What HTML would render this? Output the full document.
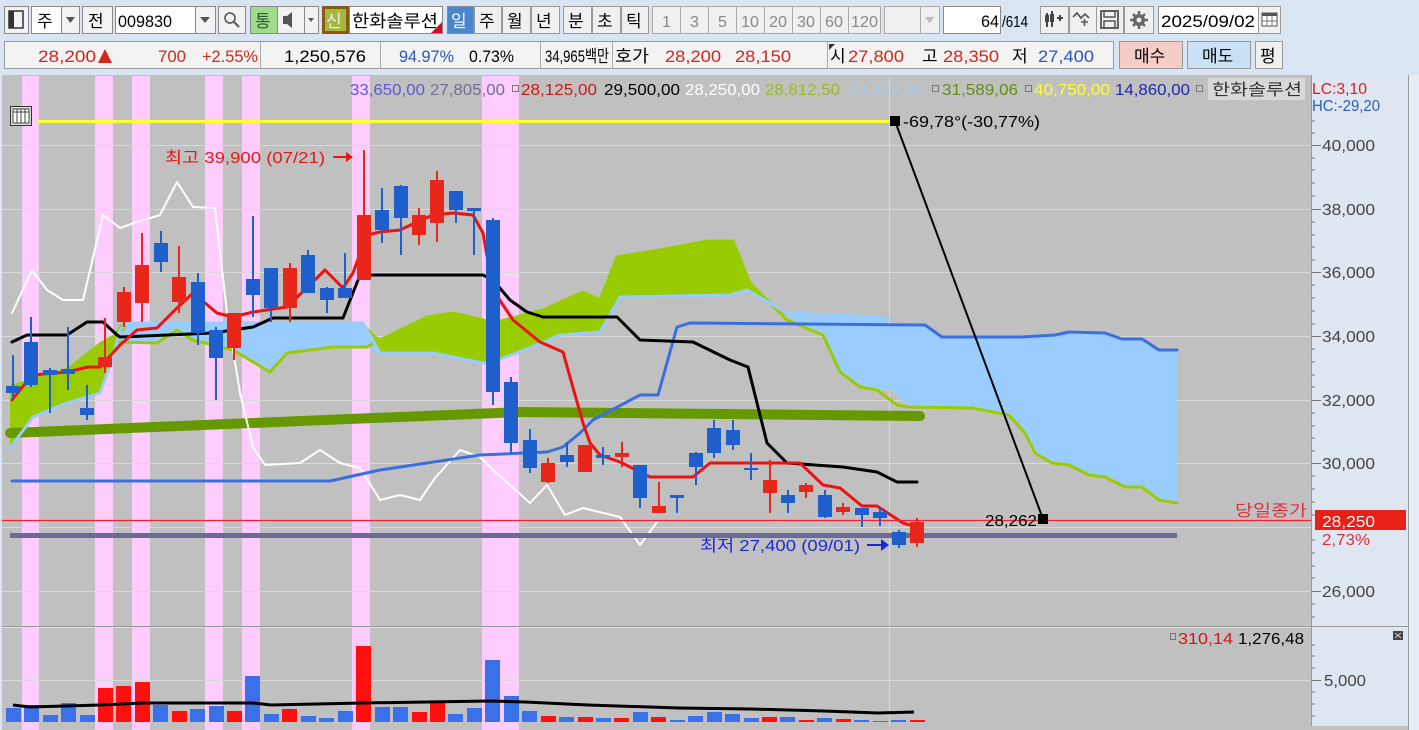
<!DOCTYPE html>
<html><head><meta charset="utf-8"><style>
html,body{margin:0;padding:0;background:#d9e5f3;overflow:hidden}
svg{display:block}
text{font-family:"Liberation Sans","Noto Sans CJK KR",sans-serif}
.r{fill:#e8261a}.b{fill:#1f5fcc}
.vr{fill:#ff1010}.vb{fill:#3a70e8}
</style></head><body>
<svg width="1419" height="730" viewBox="0 0 1419 730" xmlns="http://www.w3.org/2000/svg">
<rect width="1419" height="730" fill="#d9e5f3"/>
<g font-size="17" stroke-width="1">
<rect x="4.5" y="6.5" width="24" height="27" fill="#f2f2f2" stroke="#8a8a8a"/>
<rect x="9" y="11" width="14" height="17" fill="none" stroke="#333" stroke-width="1.5"/><rect x="9" y="11" width="5" height="17" fill="#333"/>
<rect x="31.5" y="6.5" width="30" height="27" fill="#fff" stroke="#8a8a8a"/><text x="37" y="27">주</text>
<rect x="61.5" y="6.5" width="18" height="27" fill="#f2f2f2" stroke="#8a8a8a"/><path d="M66 17h9l-4.5 6z" fill="#555"/>
<rect x="82.5" y="6.5" width="30" height="27" fill="#f2f2f2" stroke="#8a8a8a"/><text x="88" y="27">전</text>
<rect x="115.5" y="6.5" width="80" height="27" fill="#fff" stroke="#8a8a8a"/><text x="118" y="27" textLength="54" lengthAdjust="spacingAndGlyphs">009830</text>
<rect x="195.5" y="6.5" width="20" height="27" fill="#f2f2f2" stroke="#8a8a8a"/><path d="M200 17h10l-5 6z" fill="#555"/>
<rect x="218.5" y="6.5" width="27" height="27" fill="#f2f2f2" stroke="#8a8a8a"/><circle cx="230" cy="18" r="5" fill="none" stroke="#555" stroke-width="1.6"/><path d="M234 22l5 5" stroke="#555" stroke-width="2"/>
<rect x="250.5" y="6.5" width="27" height="27" fill="#9edc8c" stroke="#8a8a8a"/><text x="255" y="27" fill="#2a5a2a">통</text>
<rect x="277.5" y="6.5" width="27" height="27" fill="#f2f2f2" stroke="#8a8a8a"/><path d="M283 16h4l5-4v16l-5-4h-4z" fill="#555"/>
<rect x="304.5" y="6.5" width="14" height="27" fill="#f2f2f2" stroke="#8a8a8a"/><path d="M308 18h6l-3 4z" fill="#555"/>
<rect x="322" y="6" width="27" height="28" fill="#8a5a14"/><rect x="325" y="9" width="21" height="22" fill="#a4b83c"/><text x="326" y="27" fill="#eef">신</text>
<rect x="349.5" y="6.5" width="93" height="27" fill="#fff" stroke="#8a8a8a"/><text x="352" y="27" textLength="86" lengthAdjust="spacingAndGlyphs">한화솔루션</text><path d="M442 22v11h-11z" fill="#d01020"/>
<rect x="447.5" y="6.5" width="26" height="27" fill="#4a86cc" stroke="#8a8a8a"/><text x="451" y="27" fill="#fff">일</text>
<g fill="#f0f0f0" stroke="#9a9a9a">
<rect x="474.5" y="6.5" width="27" height="27"/><rect x="502.5" y="6.5" width="28" height="27"/><rect x="531.5" y="6.5" width="28" height="27"/>
<rect x="563.5" y="6.5" width="28" height="27"/><rect x="592.5" y="6.5" width="28" height="27"/><rect x="621.5" y="6.5" width="27" height="27"/>
</g>
<text x="479" y="27">주</text><text x="507" y="27">월</text><text x="536" y="27">년</text><text x="568" y="27">분</text><text x="597" y="27">초</text><text x="626" y="27">틱</text>
<g fill="#f0f0f0" stroke="#aaa">
<rect x="652.5" y="6.5" width="28" height="27"/><rect x="680.5" y="6.5" width="28" height="27"/><rect x="708.5" y="6.5" width="28" height="27"/><rect x="736.5" y="6.5" width="28" height="27"/><rect x="764.5" y="6.5" width="28" height="27"/><rect x="792.5" y="6.5" width="28" height="27"/><rect x="820.5" y="6.5" width="28" height="27"/><rect x="848.5" y="6.5" width="32" height="27"/>
<rect x="884.5" y="6.5" width="36" height="27"/><rect x="920.5" y="6.5" width="19" height="27"/>
</g>
<g fill="#888" font-size="16"><text x="662" y="27">1</text><text x="690" y="27">3</text><text x="718" y="27">5</text><text x="741" y="27" textLength="18" lengthAdjust="spacingAndGlyphs">10</text><text x="769" y="27" textLength="18" lengthAdjust="spacingAndGlyphs">20</text><text x="797" y="27" textLength="18" lengthAdjust="spacingAndGlyphs">30</text><text x="825" y="27" textLength="18" lengthAdjust="spacingAndGlyphs">60</text><text x="851" y="27" textLength="27" lengthAdjust="spacingAndGlyphs">120</text></g>
<path d="M925 17h9l-4.5 6z" fill="#bbb"/>
<rect x="943.5" y="6.5" width="57" height="27" fill="#fff" stroke="#8a8a8a"/><text x="981" y="27" textLength="18" lengthAdjust="spacingAndGlyphs">64</text><text x="1002" y="27" font-size="16" textLength="26" lengthAdjust="spacingAndGlyphs">/614</text>
<g fill="#f0f0f0" stroke="#9a9a9a"><rect x="1040.5" y="6.5" width="28" height="27"/><rect x="1069.5" y="6.5" width="27" height="27"/><rect x="1096.5" y="6.5" width="27" height="27"/><rect x="1124.5" y="6.5" width="29" height="27"/></g>
<path d="M1047 13v14M1052 11v16M1057 18h6M1060 15v6" stroke="#444" stroke-width="2"/><rect x="1045" y="15" width="4" height="7" fill="#444"/><rect x="1050" y="14" width="4" height="8" fill="#444"/>
<path d="M1073 17l4-4 4 5 4-4 4 4M1081 22h7M1084.5 19v7" stroke="#555" stroke-width="1.6" fill="none"/>
<rect x="1101" y="11" width="17" height="17" fill="none" stroke="#555" stroke-width="1.8"/><rect x="1104" y="11" width="11" height="6" fill="none" stroke="#555" stroke-width="1.5"/><rect x="1104" y="21" width="11" height="7" fill="none" stroke="#555" stroke-width="1.5"/>
<circle cx="1139" cy="20" r="6" fill="#666"/><path d="M1139 11v18M1130 20h18M1133 14l12 12M1145 14l-12 12" stroke="#666" stroke-width="2.5"/><circle cx="1139" cy="20" r="2.5" fill="#f0f0f0"/>
<rect x="1158.5" y="6.5" width="100" height="27" fill="#fff" stroke="#8a8a8a"/><text x="1161" y="27" textLength="94" lengthAdjust="spacingAndGlyphs">2025/09/02</text>
<rect x="1258.5" y="6.5" width="22" height="27" fill="#f0f0f0" stroke="#9a9a9a"/><rect x="1262" y="13" width="15" height="13" fill="#fff" stroke="#555"/><rect x="1262" y="13" width="15" height="3" fill="#555"/><path d="M1267 16v10M1272 16v10M1262 21h15" stroke="#777" stroke-width="1"/>
</g>
<g font-size="17">
<rect x="4.5" y="41.5" width="1109" height="27" fill="#f3f3f3" stroke="#999"/>
<path d="M260.5 42v27M380.5 42v27M540.5 42v27M612.5 42v27M827.5 42v27" stroke="#aaa"/>
<g fill="#d0281c">
<text x="38" y="62" textLength="58" lengthAdjust="spacingAndGlyphs">28,200</text><path d="M98 63l7-14 7 14z"/>
<text x="158" y="62" textLength="28" lengthAdjust="spacingAndGlyphs">700</text>
<text x="202" y="62" textLength="56" lengthAdjust="spacingAndGlyphs">+2.55%</text>
<text x="665" y="62" textLength="56" lengthAdjust="spacingAndGlyphs">28,200</text>
<text x="735" y="62" textLength="56" lengthAdjust="spacingAndGlyphs">28,150</text>
<text x="848" y="62" textLength="56" lengthAdjust="spacingAndGlyphs">27,800</text>
<text x="943" y="62" textLength="56" lengthAdjust="spacingAndGlyphs">28,350</text>
</g>
<text x="284" y="62" textLength="82" lengthAdjust="spacingAndGlyphs">1,250,576</text>
<text x="399" y="62" fill="#2b55b8" textLength="55" lengthAdjust="spacingAndGlyphs">94.97%</text>
<text x="469" y="62" textLength="45" lengthAdjust="spacingAndGlyphs">0.73%</text>
<text x="545" y="62" textLength="64" lengthAdjust="spacingAndGlyphs">34,965백만</text>
<text x="615" y="62" textLength="34" lengthAdjust="spacingAndGlyphs">호가</text>
<text x="830" y="62">시</text><path d="M829 44h6l-6 6z" fill="#333"/>
<text x="922" y="62">고</text><text x="1012" y="62">저</text>
<text x="1038" y="62" fill="#2b55b8" textLength="56" lengthAdjust="spacingAndGlyphs">27,400</text>
<rect x="1119.5" y="41.5" width="63" height="27" fill="#f6cdc6" stroke="#999"/><text x="1134" y="62">매수</text>
<rect x="1187.5" y="41.5" width="63" height="27" fill="#c9e1f5" stroke="#999"/><text x="1202" y="62">매도</text>
<rect x="1255.5" y="41.5" width="27" height="27" fill="#f0f0f0" stroke="#999"/><text x="1260" y="62">평</text>
</g>
<rect x="2" y="75" width="1310" height="651" fill="#c0c0c0"/>
<rect x="1311" y="75" width="97" height="651" fill="#dde6f1"/>
<rect x="1408" y="75" width="11" height="655" fill="#e6edf6"/>
<path d="M1408.5 75v655" stroke="#999"/>
<path d="M1311.5 75v651" stroke="#999"/>
<rect x="2" y="726" width="1406" height="4" fill="#c0c0c0"/>
<g fill="#ffccff">
<rect x="22" y="76" width="17" height="550"/><rect x="95" y="76" width="18" height="550"/><rect x="132" y="76" width="18" height="550"/><rect x="205" y="76" width="18" height="550"/><rect x="242" y="76" width="18" height="550"/><rect x="352" y="76" width="18" height="550"/><rect x="482" y="76" width="37" height="550"/>
<rect x="22" y="628" width="17" height="102"/><rect x="95" y="628" width="18" height="102"/><rect x="132" y="628" width="18" height="102"/><rect x="205" y="628" width="18" height="102"/><rect x="242" y="628" width="18" height="102"/><rect x="352" y="628" width="18" height="102"/><rect x="482" y="628" width="37" height="102"/>
</g>
<g stroke="#d9d9d9" stroke-width="1">
<path d="M2 145.5h1309M2 209.5h1309M2 272.5h1309M2 336.5h1309M2 400.5h1309M2 463.5h1309M2 527.5h1309M2 591.5h1309M2 680.5h1309"/>
<path d="M889.5 76v650"/>
</g>
<path d="M2 626.5h1406" stroke="#999"/>
<path d="M2 627.5h1309" stroke="#e0e0e0"/>
<g stroke="#777"><path d="M1311 145.5h10M1311 209.5h10M1311 272.5h10M1311 336.5h10M1311 400.5h10M1311 463.5h10M1311 591.5h10M1311 680.5h10"/>
<path d="M1311 121h4M1311 133h4M1311 158h4M1311 170h4M1311 183h4M1311 196h4M1311 222h4M1311 235h4M1311 247h4M1311 260h4M1311 285h4M1311 298h4M1311 311h4M1311 324h4M1311 349h4M1311 362h4M1311 375h4M1311 387h4M1311 413h4M1311 426h4M1311 438h4M1311 451h4M1311 476h4M1311 489h4M1311 502h4M1311 515h4M1311 540h4M1311 553h4M1311 566h4M1311 578h4M1311 604h4M1311 617h4M1311 645h4M1311 656h4M1311 668h4M1311 692h4M1311 704h4M1311 716h4"/></g>
<g font-size="16" fill="#444">
<text x="1322" y="151" textLength="53" lengthAdjust="spacingAndGlyphs">40,000</text>
<text x="1322" y="215" textLength="53" lengthAdjust="spacingAndGlyphs">38,000</text>
<text x="1322" y="278" textLength="53" lengthAdjust="spacingAndGlyphs">36,000</text>
<text x="1322" y="342" textLength="53" lengthAdjust="spacingAndGlyphs">34,000</text>
<text x="1322" y="406" textLength="53" lengthAdjust="spacingAndGlyphs">32,000</text>
<text x="1322" y="469" textLength="53" lengthAdjust="spacingAndGlyphs">30,000</text>
<text x="1322" y="597" textLength="53" lengthAdjust="spacingAndGlyphs">26,000</text>
<text x="1324" y="686" textLength="42" lengthAdjust="spacingAndGlyphs">5,000</text>
</g>
<text x="1312" y="94" font-size="16" fill="#d82020" textLength="55" lengthAdjust="spacingAndGlyphs">LC:3,10</text>
<text x="1312" y="111" font-size="16" fill="#2b5ec0" textLength="68" lengthAdjust="spacingAndGlyphs">HC:-29,20</text>
<rect x="1393" y="631" width="10" height="9" fill="#444"/><path d="M1395 633l6 5M1401 633l-6 5" stroke="#ccc"/>
<polygon fill="#99cc00" points="10,385 33,378 67,368 100,342 113,335 120,325 127,323 127,330 120,332 113,357 100,393 67,403 33,417 10,448"/>
<polygon fill="#99ccff" points="127,323 363,323 380,353 367,347 333,347 287,353 270,372 233,350 193,340 177,330 157,343 120,342"/>
<polygon fill="#99cc00" points="363,323 380,340 427,317 453,313 483,320 493,323 543,310 583,292 600,300 617,257 660,250 707,241 733,241 750,283 760,293 787,316 747,290 730,295 620,297 600,332 560,335 537,345 493,362 483,363 433,353 380,353"/>
<polygon fill="#99ccff" points="787,316 877,317 892,325 925,327 942,338 1022,338 1055,336 1069,333 1105,334 1122,340 1142,340 1159,350 1177,350 1177,503 1159,500 1142,487 1125,487 1105,477 1089,475 1069,465 1052,463 1035,453 1025,433 1009,415 972,408 909,407 892,390 877,390 860,387 840,372 823,335"/>
<g fill="none" stroke-linejoin="round" stroke-linecap="round">
<polyline stroke="#669900" stroke-width="10" points="10,433 520,412 920,416"/>
<polyline stroke="#99cc00" stroke-width="3" points="120,342 157,343 177,330 193,340 233,350 270,372 287,353 333,347 367,347 380,340 427,317 453,313 483,320 493,323 543,310 583,292 600,300 617,257 660,250 707,241 733,241 750,283 760,293 787,320 823,335 840,372 860,387 877,390 897,405 909,407 972,408 1009,415 1025,433 1035,453 1052,463 1069,465 1089,475 1105,477 1125,487 1142,487 1159,500 1177,503"/>
<polyline stroke="#99ccff" stroke-width="3" points="10,448 33,417 67,403 100,393 113,357 120,330 127,323 363,323 380,353 433,353 483,363 493,362 537,345 560,335 600,332 620,297 730,295 747,290 787,313 877,317 890,320"/>
<polyline stroke="#ffffff" stroke-width="2" points="12,313 32,270 47,290 63,300 83,300 103,215 120,228 137,222 160,215 177,182 193,207 215,208 227,313 240,393 253,447 265,465 300,463 320,450 340,463 360,468 380,500 400,495 420,500 435,478 460,450 480,457 490,467 530,503 547,485 565,515 583,508 620,517 640,545 657,522"/>
<polyline stroke="#3b6fe0" stroke-width="3" points="12,481 330,481 380,470 480,455 547,452 563,447 580,433 593,420 640,395 658,395 677,327 690,323 925,325 942,337 1022,337 1055,335 1069,332 1105,333 1122,339 1142,339 1159,350 1177,350"/>
<polyline stroke="#000" stroke-width="3" points="12,342 27,335 67,335 87,322 103,322 117,335 120,337 213,333 233,330 253,327 273,318 343,318 360,275 483,275 493,280 510,300 527,312 543,317 617,317 640,340 693,342 730,360 748,367 767,443 787,463 843,467 877,472 897,482 917,482"/>
<polyline stroke="#ee1111" stroke-width="3" points="12,400 32,375 67,372 88,367 100,367 120,345 137,330 157,328 177,308 193,293 217,313 233,317 253,312 287,307 325,270 343,288 353,273 367,235 380,232 400,230 417,222 433,215 453,213 473,215 483,233 493,290 513,320 540,342 563,352 570,377 583,423 590,443 600,455 620,462 650,477 693,477 710,463 800,463 823,485 840,488 862,506 877,506 903,523 917,527"/>
</g>
<path d="M38 121.5h857" stroke="#ffff33" stroke-width="3"/>
<path d="M10 535.5h1167" stroke="#6b6b9a" stroke-width="5"/>
<path d="M2 520.5h1309" stroke="#ee2233" stroke-width="1.2"/>
<g>
<rect class="b" x="12" y="355" width="2" height="45"/><rect class="b" x="6" y="386" width="14" height="7"/>
<rect class="b" x="30" y="317" width="2" height="70"/><rect class="b" x="24" y="342" width="14" height="43"/>
<rect class="b" x="49" y="368" width="2" height="45"/><rect class="b" x="43" y="370" width="14" height="5"/>
<rect class="b" x="67" y="327" width="2" height="63"/><rect class="b" x="61" y="369" width="14" height="5"/>
<rect class="b" x="86" y="385" width="2" height="35"/><rect class="b" x="80" y="408" width="14" height="7"/>
<rect class="r" x="104" y="318" width="2" height="55"/><rect class="r" x="98" y="357" width="14" height="10"/>
<rect class="r" x="123" y="287" width="2" height="40"/><rect class="r" x="117" y="292" width="14" height="30"/>
<rect class="r" x="141" y="233" width="2" height="89"/><rect class="r" x="135" y="265" width="14" height="38"/>
<rect class="b" x="160" y="231" width="2" height="41"/><rect class="b" x="154" y="243" width="14" height="19"/>
<rect class="r" x="178" y="246" width="2" height="67"/><rect class="r" x="172" y="277" width="14" height="25"/>
<rect class="b" x="197" y="273" width="2" height="72"/><rect class="b" x="191" y="282" width="14" height="51"/>
<rect class="b" x="215" y="327" width="2" height="73"/><rect class="b" x="209" y="330" width="14" height="28"/>
<rect class="r" x="233" y="313" width="2" height="47"/><rect class="r" x="227" y="313" width="14" height="35"/>
<rect class="b" x="252" y="216" width="2" height="101"/><rect class="b" x="246" y="279" width="14" height="16"/>
<rect class="b" x="270" y="268" width="2" height="54"/><rect class="b" x="264" y="268" width="14" height="40"/>
<rect class="r" x="289" y="263" width="2" height="59"/><rect class="r" x="283" y="268" width="14" height="40"/>
<rect class="b" x="307" y="250" width="2" height="43"/><rect class="b" x="301" y="255" width="14" height="38"/>
<rect class="b" x="326" y="287" width="2" height="26"/><rect class="b" x="320" y="288" width="14" height="12"/>
<rect class="b" x="344" y="253" width="2" height="45"/><rect class="b" x="338" y="288" width="14" height="10"/>
<rect class="r" x="363" y="150" width="2" height="130"/><rect class="r" x="357" y="215" width="14" height="65"/>
<rect class="b" x="381" y="188" width="2" height="55"/><rect class="b" x="375" y="210" width="14" height="20"/>
<rect class="b" x="400" y="185" width="2" height="70"/><rect class="b" x="394" y="186" width="14" height="32"/>
<rect class="r" x="418" y="208" width="2" height="37"/><rect class="r" x="412" y="215" width="14" height="20"/>
<rect class="r" x="436" y="171" width="2" height="71"/><rect class="r" x="430" y="180" width="14" height="43"/>
<rect class="b" x="455" y="191" width="2" height="32"/><rect class="b" x="449" y="191" width="14" height="19"/>
<rect class="b" x="473" y="208" width="2" height="47"/><rect class="b" x="467" y="208" width="14" height="3"/>
<rect class="b" x="492" y="218" width="2" height="187"/><rect class="b" x="486" y="220" width="14" height="172"/>
<rect class="b" x="510" y="377" width="2" height="76"/><rect class="b" x="504" y="382" width="14" height="61"/>
<rect class="b" x="529" y="429" width="2" height="44"/><rect class="b" x="523" y="440" width="14" height="28"/>
<rect class="r" x="547" y="458" width="2" height="25"/><rect class="r" x="541" y="463" width="14" height="19"/>
<rect class="b" x="566" y="442" width="2" height="25"/><rect class="b" x="560" y="455" width="14" height="7"/>
<rect class="r" x="584" y="445" width="2" height="27"/><rect class="r" x="578" y="445" width="14" height="27"/>
<rect class="b" x="602" y="447" width="2" height="18"/><rect class="b" x="596" y="455" width="14" height="3"/>
<rect class="r" x="621" y="442" width="2" height="25"/><rect class="r" x="615" y="453" width="14" height="4"/>
<rect class="b" x="639" y="465" width="2" height="43"/><rect class="b" x="633" y="465" width="14" height="33"/>
<rect class="r" x="658" y="482" width="2" height="31"/><rect class="r" x="652" y="506" width="14" height="7"/>
<rect class="b" x="676" y="495" width="2" height="18"/><rect class="b" x="670" y="495" width="14" height="3"/>
<rect class="b" x="695" y="452" width="2" height="33"/><rect class="b" x="689" y="453" width="14" height="14"/>
<rect class="b" x="713" y="420" width="2" height="38"/><rect class="b" x="707" y="428" width="14" height="25"/>
<rect class="b" x="732" y="420" width="2" height="30"/><rect class="b" x="726" y="430" width="14" height="15"/>
<rect class="b" x="750" y="453" width="2" height="27"/><rect class="b" x="744" y="468" width="14" height="2"/>
<rect class="r" x="769" y="460" width="2" height="53"/><rect class="r" x="763" y="480" width="14" height="13"/>
<rect class="b" x="787" y="490" width="2" height="23"/><rect class="b" x="781" y="495" width="14" height="8"/>
<rect class="r" x="805" y="483" width="2" height="15"/><rect class="r" x="799" y="485" width="14" height="7"/>
<rect class="b" x="824" y="490" width="2" height="28"/><rect class="b" x="818" y="495" width="14" height="22"/>
<rect class="r" x="842" y="503" width="2" height="12"/><rect class="r" x="836" y="507" width="14" height="5"/>
<rect class="b" x="861" y="508" width="2" height="19"/><rect class="b" x="855" y="508" width="14" height="7"/>
<rect class="b" x="879" y="508" width="2" height="18"/><rect class="b" x="873" y="512" width="14" height="6"/>
<rect class="b" x="898" y="530" width="2" height="18"/><rect class="b" x="892" y="532" width="14" height="13"/>
<rect class="r" x="916" y="518" width="2" height="29"/><rect class="r" x="910" y="522" width="14" height="21"/>
</g>
<path d="M895 121L1043 519" stroke="#000" stroke-width="2"/>
<rect x="890" y="116" width="10" height="10" fill="#000"/><rect x="1038" y="514" width="10" height="10" fill="#000"/>
<g font-size="16">
<text x="903" y="127" textLength="137" lengthAdjust="spacingAndGlyphs">-69,78°(-30,77%)</text>
<text x="985" y="526" textLength="52" lengthAdjust="spacingAndGlyphs">28,262</text>
<text x="165" y="163" fill="#e01818" textLength="160" lengthAdjust="spacingAndGlyphs">최고 39,900 (07/21)</text>
<path d="M333 157h14" stroke="#e01818" stroke-width="2"/><path d="M346 152l7 5-7 5z" fill="#e01818"/>
<text x="700" y="551" fill="#1a2ad0" textLength="160" lengthAdjust="spacingAndGlyphs">최저 27,400 (09/01)</text>
<path d="M867 545h16" stroke="#1a2ad0" stroke-width="2"/><path d="M881 539l8 6-8 6z" fill="#1a2ad0"/>
<text x="1235" y="516" fill="#e03040" textLength="72" lengthAdjust="spacingAndGlyphs">당일종가</text>
</g>
<rect x="1315" y="510" width="91" height="20" fill="#e82018"/>
<text x="1322" y="527" font-size="16" fill="#fff" textLength="53" lengthAdjust="spacingAndGlyphs">28,250</text>
<text x="1322" y="545" font-size="16" fill="#e03040" textLength="48" lengthAdjust="spacingAndGlyphs">2,73%</text>
<g font-size="16">
<text x="350" y="95" fill="#5a5ad8" textLength="75" lengthAdjust="spacingAndGlyphs">33,650,00</text>
<text x="430" y="95" fill="#6f6f96" textLength="75" lengthAdjust="spacingAndGlyphs">27,805,00</text>
<rect x="512.5" y="85.5" width="6" height="6" fill="none" stroke="#777"/>
<text x="521" y="95" fill="#d01818" textLength="76" lengthAdjust="spacingAndGlyphs">28,125,00</text>
<text x="604" y="95" fill="#000" textLength="76" lengthAdjust="spacingAndGlyphs">29,500,00</text>
<text x="685" y="95" fill="#fff" textLength="75" lengthAdjust="spacingAndGlyphs">28,250,00</text>
<text x="765" y="95" fill="#99bb22" textLength="75" lengthAdjust="spacingAndGlyphs">28,812,50</text>
<text x="848" y="95" fill="#a8cce8" textLength="75" lengthAdjust="spacingAndGlyphs">33,325,00</text>
<rect x="932.5" y="85.5" width="6" height="6" fill="none" stroke="#777"/>
<text x="942" y="95" fill="#5f8f18" textLength="76" lengthAdjust="spacingAndGlyphs">31,589,06</text>
<rect x="1025.5" y="85.5" width="6" height="6" fill="none" stroke="#777"/>
<text x="1034" y="95" fill="#ffff33" textLength="76" lengthAdjust="spacingAndGlyphs">40,750,00</text>
<text x="1115" y="95" fill="#1a2aa8" textLength="75" lengthAdjust="spacingAndGlyphs">14,860,00</text>
<rect x="1196.5" y="85.5" width="6" height="6" fill="none" stroke="#777"/>
<rect x="1208" y="78" width="97" height="22" fill="#d8d8d8"/>
<text x="1212" y="95" fill="#333" textLength="90" lengthAdjust="spacingAndGlyphs">한화솔루션</text>
</g>
<rect x="10.5" y="106.5" width="21" height="19" fill="#ddd" stroke="#333"/><rect x="13" y="109" width="16" height="14" fill="#fff" stroke="#444"/><path d="M17 109v14M21 109v14M25 109v14M13 112h16" stroke="#444"/>
<g>
<rect class="vb" x="6" y="708" width="15" height="14"/><rect class="vb" x="24" y="705" width="15" height="17"/><rect class="vb" x="43" y="715" width="15" height="7"/><rect class="vb" x="61" y="703" width="15" height="19"/><rect class="vb" x="80" y="715" width="15" height="7"/>
<rect class="vr" x="98" y="688" width="15" height="34"/><rect class="vr" x="116" y="686" width="15" height="36"/><rect class="vr" x="135" y="682" width="15" height="40"/><rect class="vb" x="153" y="705" width="15" height="17"/><rect class="vr" x="172" y="711" width="15" height="11"/>
<rect class="vb" x="190" y="709" width="15" height="13"/><rect class="vb" x="209" y="706" width="15" height="16"/><rect class="vr" x="227" y="711" width="15" height="11"/><rect class="vb" x="245" y="676" width="15" height="46"/><rect class="vb" x="264" y="714" width="15" height="8"/>
<rect class="vr" x="282" y="709" width="15" height="13"/><rect class="vb" x="301" y="716" width="15" height="6"/><rect class="vb" x="319" y="718" width="15" height="4"/><rect class="vb" x="338" y="711" width="15" height="11"/><rect class="vr" x="356" y="646" width="15" height="76"/>
<rect class="vb" x="375" y="707" width="15" height="15"/><rect class="vb" x="393" y="707" width="15" height="15"/><rect class="vr" x="412" y="712" width="15" height="10"/><rect class="vr" x="430" y="703" width="15" height="19"/><rect class="vb" x="448" y="714" width="15" height="8"/>
<rect class="vb" x="467" y="708" width="15" height="14"/><rect class="vb" x="485" y="660" width="15" height="62"/><rect class="vb" x="504" y="696" width="15" height="26"/><rect class="vb" x="522" y="711" width="15" height="11"/><rect class="vr" x="541" y="716" width="15" height="6"/>
<rect class="vb" x="559" y="717" width="15" height="5"/><rect class="vr" x="578" y="717" width="15" height="5"/><rect class="vb" x="596" y="718" width="15" height="4"/><rect class="vr" x="614" y="718" width="15" height="4"/><rect class="vb" x="633" y="712" width="15" height="10"/>
<rect class="vr" x="651" y="717" width="15" height="5"/><rect class="vb" x="670" y="720" width="15" height="2"/><rect class="vb" x="688" y="716" width="15" height="6"/><rect class="vb" x="707" y="712" width="15" height="10"/><rect class="vb" x="725" y="714" width="15" height="8"/>
<rect class="vb" x="744" y="718" width="15" height="4"/><rect class="vr" x="762" y="717" width="15" height="5"/><rect class="vb" x="780" y="717" width="15" height="5"/><rect class="vr" x="799" y="720" width="15" height="2"/><rect class="vb" x="817" y="718" width="15" height="4"/>
<rect class="vr" x="836" y="719" width="15" height="3"/><rect class="vb" x="854" y="720" width="15" height="2"/><rect class="vb" x="873" y="721" width="15" height="1"/><rect class="vb" x="891" y="720" width="15" height="2"/><rect class="vr" x="910" y="720" width="15" height="2"/>
</g>
<polyline fill="none" stroke="#000" stroke-width="3" points="13,705 30,707 100,705 145,703 253,703 271,705 362,703 489,701 525,702 588,705 679,708 751,709 824,711 878,713 914,712"/>
<rect x="1170.5" y="633.5" width="5" height="6" fill="none" stroke="#777"/>
<text x="1178" y="644" font-size="16" fill="#d01818" textLength="55" lengthAdjust="spacingAndGlyphs">310,14</text>
<text x="1238" y="644" font-size="16" fill="#000" textLength="66" lengthAdjust="spacingAndGlyphs">1,276,48</text>
</svg>
</body></html>
